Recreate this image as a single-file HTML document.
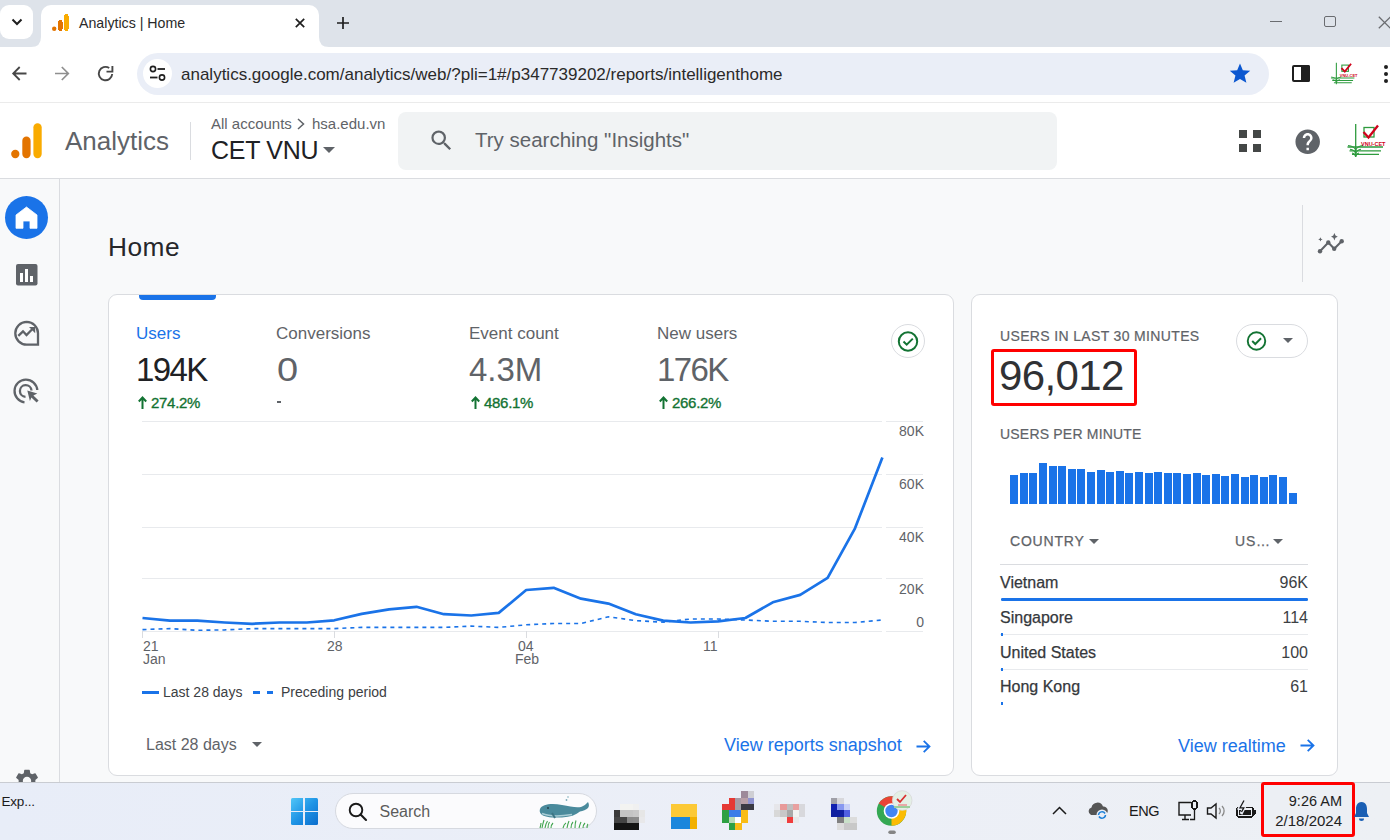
<!DOCTYPE html>
<html><head><meta charset="utf-8">
<style>
*{margin:0;padding:0;box-sizing:border-box}
html,body{width:1390px;height:840px;overflow:hidden;background:#f8f9fa;font-family:"Liberation Sans",sans-serif;position:relative}
.a{position:absolute}
.t{position:absolute;white-space:nowrap;line-height:1}
svg{position:absolute;overflow:visible}
rect{shape-rendering:crispEdges}
</style></head><body>

<!-- TAB STRIP -->
<div class="a" style="left:0;top:0;width:1390px;height:47px;background:#dee3ea"></div>
<div class="a" style="left:0;top:5px;width:33px;height:34px;background:#fff;border-radius:9px"></div>
<svg style="left:11px;top:18px" width="12" height="8" viewBox="0 0 12 8"><path d="M1.5 1.5 L6 6 L10.5 1.5" fill="none" stroke="#1f1f1f" stroke-width="2"/></svg>
<div class="a" style="left:41px;top:5px;width:278px;height:42px;background:#fff;border-radius:10px 10px 0 0"></div>
<!-- tab bottom flares -->
<svg style="left:31px;top:37px" width="10" height="10" viewBox="0 0 10 10"><path d="M0 10 Q10 10 10 0 L10 10 Z" fill="#fff"/></svg>
<svg style="left:319px;top:37px" width="10" height="10" viewBox="0 0 10 10"><path d="M10 10 Q0 10 0 0 L0 10 Z" fill="#fff"/></svg>
<!-- favicon -->
<svg style="left:52px;top:14px" width="17" height="17" viewBox="0 0 17 17"><rect x="12" y="0" width="4.5" height="17" rx="2.2" fill="#f9ab00"/><rect x="6" y="6" width="4.5" height="11" rx="2.2" fill="#e37400"/><circle cx="2.2" cy="14.8" r="2.2" fill="#e37400"/></svg>
<div class="t" style="left:79px;top:15.7px;font-size:14.2px;color:#2a2a2a">Analytics | Home</div>
<svg style="left:295px;top:18px" width="10" height="10" viewBox="0 0 10 10"><path d="M0.8 0.8 L9.2 9.2 M9.2 0.8 L0.8 9.2" stroke="#1f1f1f" stroke-width="1.7"/></svg>
<svg style="left:336px;top:16px" width="14" height="14" viewBox="0 0 14 14"><path d="M7 1 V13 M1 7 H13" stroke="#1f1f1f" stroke-width="1.7"/></svg>
<!-- window controls -->
<div class="a" style="left:1270px;top:20.6px;width:12px;height:1.3px;background:#6a6c70"></div>
<div class="a" style="left:1324.3px;top:15.8px;width:12px;height:11.6px;border:1.3px solid #6a6c70;border-radius:2px"></div>
<svg style="left:1378px;top:15.5px" width="14" height="13" viewBox="0 0 14 13"><path d="M0.8 0.8 L12.5 12.3 M12.5 0.8 L0.8 12.3" stroke="#6a6c70" stroke-width="1.3"/></svg>
<!-- TOOLBAR -->
<div class="a" style="left:0;top:47px;width:1390px;height:54px;background:#fff"></div>
<div class="a" style="left:0;top:101px;width:1390px;height:1px;background:#fff"></div><div class="a" style="left:0;top:102px;width:1390px;height:1px;background:#ebebeb"></div>


<!-- back/fwd/reload -->
<svg style="left:0;top:50px" width="130" height="50" viewBox="0 50 130 50">
<path d="M26.5 73.5 H13.5 M19.7 67 L13.2 73.5 L19.7 80" fill="none" stroke="#474747" stroke-width="1.8"/>
<path d="M55 73.5 H68 M61.8 67 L68.3 73.5 L61.8 80" fill="none" stroke="#8f8f8f" stroke-width="1.7"/>
<path d="M112.2 74 A6.7 6.7 0 1 1 109.2 68" fill="none" stroke="#474747" stroke-width="1.9"/>
<path d="M106.5 71.6 H112.4 V66" fill="none" stroke="#474747" stroke-width="1.9"/>
</svg>
<!-- omnibox -->
<div class="a" style="left:137px;top:53px;width:1132px;height:42px;background:#eaeef7;border-radius:21px"></div>
<div class="a" style="left:143px;top:59px;width:29px;height:29px;background:#fff;border-radius:50%"></div>
<svg style="left:149px;top:65px" width="17" height="17" viewBox="0 0 17 17"><circle cx="4" cy="4" r="2.6" fill="none" stroke="#1f1f1f" stroke-width="1.6"/><path d="M8.5 4 H16" stroke="#1f1f1f" stroke-width="1.8"/><circle cx="13" cy="12.5" r="2.6" fill="none" stroke="#1f1f1f" stroke-width="1.6"/><path d="M1 12.5 H8.5" stroke="#1f1f1f" stroke-width="1.8"/></svg>
<div class="t" style="left:181px;top:66px;font-size:17px;color:#2a2a2a">analytics.google.com/analytics/web/?pli=1#/p347739202/reports/intelligenthome</div>
<svg style="left:1229px;top:63px" width="22" height="21" viewBox="0 0 24 23"><path d="M12 0.5 L15.1 8 L23.2 8.6 L17 13.8 L19 21.7 L12 17.4 L5 21.7 L7 13.8 L0.8 8.6 L8.9 8 Z" fill="#0b57d0"/></svg>
<!-- side panel icon -->
<div class="a" style="left:1292px;top:65px;width:18px;height:17px;border:2px solid #1f1f1f;border-radius:2px"></div>
<div class="a" style="left:1301px;top:65px;width:9px;height:17px;background:#1f1f1f;border-radius:0 2px 2px 0"></div>
<!-- profile avatar small -->
<svg style="left:1326px;top:60px" width="33" height="28" viewBox="0 0 50 42"><path d="M15.7 4 V36.5 M7.5 27 H43 M9.5 30.8 H41 M12 34.3 H39" fill="none" stroke="#2e9b3e" stroke-width="1.6"/><path d="M8 25.5 Q14 26 15.7 30 Q17.4 26 23 25.5 M10 29.3 Q14.5 30 15.7 33.5 Q17 30 21 29.3" fill="none" stroke="#2e9b3e" stroke-width="1.3"/><rect x="24" y="7.5" width="10" height="9.5" fill="none" stroke="#2e9b3e" stroke-width="1.6" style="shape-rendering:auto"/><path d="M23.5 12 L28.5 17.5 L38 5.5" fill="none" stroke="#d0021b" stroke-width="2.8"/><text x="21" y="26" font-size="6" fill="#d0021b" font-family="Liberation Sans" font-weight="bold">VNU-CET</text></svg>
<div class="a" style="left:1384px;top:65px;width:4px;height:4px;background:#1f1f1f;border-radius:50%"></div>
<div class="a" style="left:1384px;top:72px;width:4px;height:4px;background:#1f1f1f;border-radius:50%"></div>
<div class="a" style="left:1384px;top:79px;width:4px;height:4px;background:#1f1f1f;border-radius:50%"></div>

<!-- GA HEADER -->
<div class="a" style="left:0;top:103px;width:1390px;height:76px;background:#fff;border-bottom:1px solid #dadce0"></div>
<svg style="left:0;top:110px" width="50" height="60" viewBox="0 110 50 60"><rect x="33.4" y="123.2" width="8.3" height="35" rx="4.15" fill="#f9ab00" style="shape-rendering:auto"/><rect x="22.3" y="136.6" width="8.3" height="21.6" rx="4.15" fill="#e37400" style="shape-rendering:auto"/><circle cx="15.3" cy="154" r="4.15" fill="#e37400"/></svg>
<div class="t" style="left:65px;top:128px;font-size:26px;color:#5f6368">Analytics</div>
<div class="a" style="left:190px;top:122px;width:1px;height:38px;background:#dadce0"></div>
<div class="t" style="left:211px;top:116px;font-size:15px;color:#5f6368">All accounts</div>
<svg style="left:297px;top:118px" width="8" height="12" viewBox="0 0 8 12"><path d="M1 1 L6.5 6 L1 11" fill="none" stroke="#5f6368" stroke-width="1.5"/></svg>
<div class="t" style="left:312px;top:116px;font-size:15px;color:#5f6368">hsa.edu.vn</div>
<div class="t" style="left:211px;top:138px;font-size:25px;color:#202124;letter-spacing:-0.3px">CET VNU</div>
<svg style="left:323px;top:147px" width="12" height="6" viewBox="0 0 12 6"><path d="M0 0 H12 L6 6 Z" fill="#5f6368"/></svg>
<!-- search -->
<div class="a" style="left:398px;top:112px;width:659px;height:58px;background:#f1f3f4;border-radius:8px"></div>
<svg style="left:428px;top:127px" width="27" height="27" viewBox="0 0 24 24"><path d="M15.5 14h-.79l-.28-.27A6.47 6.47 0 0 0 16 9.5 6.5 6.5 0 1 0 9.5 16c1.61 0 3.09-.59 4.23-1.57l.27.28v.79l5 4.99L20.49 19l-4.99-5zm-6 0C7.01 14 5 11.99 5 9.5S7.01 5 9.5 5 14 7.01 14 9.5 11.99 14 9.5 14z" fill="#5f6368"/></svg>
<div class="t" style="left:475px;top:129.5px;font-size:20.5px;color:#5f6368">Try searching "Insights"</div>
<!-- apps grid -->
<div class="a" style="left:1239px;top:130px;width:8px;height:8px;background:#444746"></div>
<div class="a" style="left:1253px;top:130px;width:8px;height:8px;background:#444746"></div>
<div class="a" style="left:1239px;top:144px;width:8px;height:8px;background:#444746"></div>
<div class="a" style="left:1253px;top:144px;width:8px;height:8px;background:#444746"></div>
<!-- help -->
<svg style="left:1293px;top:126.5px" width="29.4" height="29.4" viewBox="0 0 24 24"><path d="M12 2C6.48 2 2 6.48 2 12s4.48 10 10 10 10-4.48 10-10S17.52 2 12 2zm1 17h-2v-2h2v2zm2.07-7.750l-.9.92C13.45 12.9 13 13.5 13 15h-2v-.5c0-1.1.45-2.1 1.17-2.83l1.240-1.26c.37-.36.59-.86.59-1.41 0-1.1-.9-2-2-2s-2 .9-2 2H8c0-2.21 1.79-4 4-4s4 1.79 4 4c0 .88-.36 1.68-.93 2.25z" fill="#5f6368"/></svg>
<!-- avatar -->
<svg style="left:1340px;top:120px" width="50" height="42" viewBox="0 0 50 42"><path d="M15.7 4 V36.5 M7.5 27 H43 M9.5 30.8 H41 M12 34.3 H39" fill="none" stroke="#2e9b3e" stroke-width="1.3"/><path d="M8 25.5 Q14 26 15.7 30 Q17.4 26 23 25.5 M10 29.3 Q14.5 30 15.7 33.5 Q17 30 21 29.3 M12 33 Q15 33.5 15.7 36.8 Q16.4 33.5 19 33" fill="none" stroke="#2e9b3e" stroke-width="1.1"/><rect x="24" y="7.5" width="10" height="9.5" fill="none" stroke="#2e9b3e" stroke-width="1.3" style="shape-rendering:auto"/><path d="M23.5 12 L28.5 17.5 L38 5.5" fill="none" stroke="#d0021b" stroke-width="2.3"/><text x="21" y="26" font-size="5.5" fill="#d0021b" font-family="Liberation Sans" font-weight="bold">VNU-CET</text></svg>

<!-- LEFT NAV -->
<div class="a" style="left:59px;top:179px;width:1px;height:604px;background:#dadce0"></div>
<div class="a" style="left:5px;top:196px;width:43px;height:43px;background:#1a73e8;border-radius:50%"></div>
<svg style="left:0;top:0" width="60" height="420" viewBox="0 0 60 420">
<path d="M26.5 207 L37 215 V228.3 H30 V221 H23 V228.3 H16 V215 Z" fill="#fff" stroke="#fff" stroke-width="0.8" stroke-linejoin="round"/>
<rect x="16" y="264" width="21.5" height="21.5" rx="2" fill="#5f6368" style="shape-rendering:auto"/>
<rect x="20.3" y="272.6" width="2.7" height="9.3" fill="#fff"/><rect x="25.2" y="268.7" width="2.6" height="13.2" fill="#fff"/><rect x="30" y="275.8" width="2.7" height="6.1" fill="#fff"/>
<path d="M26.7 321.9 A11.3 11.3 0 1 0 15.4 333.2" fill="none" stroke="#5f6368" stroke-width="0"/>
<path d="M26.7 321.9 A11.4 11.4 0 0 0 26.7 344.7 H38 V333.3 A11.4 11.4 0 0 0 26.7 321.9 Z" fill="none" stroke="#5f6368" stroke-width="2.3"/>
<path d="M18.3 335.8 L23 331.3 L26.5 335 L32.2 329.3" fill="none" stroke="#5f6368" stroke-width="2.3"/>
<path d="M29 327 H35.2 V333.2 Z" fill="#5f6368"/>
<path d="M24.5 402.3 A11.4 11.4 0 1 1 37.3 390" fill="none" stroke="#5f6368" stroke-width="2.3"/>
<path d="M25.5 396.8 A5.8 5.8 0 1 1 31.5 390.5" fill="none" stroke="#5f6368" stroke-width="2.3"/>
<path d="M27.3 390.6 L37.3 393.6 L33.4 395.4 L38.6 400.6 L36.6 402.6 L31.4 397.4 L29.9 401 Z" fill="#5f6368"/>
</svg>
<svg style="left:12.5px;top:766.5px" width="28" height="28" viewBox="0 0 24 24"><path d="M19.14 12.94c.04-.3.06-.61.06-.94 0-.32-.02-.64-.07-.94l2.03-1.58a.49.49 0 0 0 .12-.61l-1.92-3.32a.488.488 0 0 0-.59-.22l-2.39.96c-.5-.38-1.03-.7-1.62-.94l-.36-2.54a.484.484 0 0 0-.48-.41h-3.84c-.24 0-.43.17-.47.41l-.36 2.54c-.59.24-1.13.57-1.62.94l-2.39-.96c-.22-.08-.47 0-.59.22L2.74 8.87c-.12.21-.08.47.12.61l2.03 1.58c-.05.3-.09.63-.09.94s.02.64.07.94l-2.03 1.58a.49.49 0 0 0-.12.61l1.92 3.32c.12.22.37.29.59.22l2.39-.96c.5.38 1.03.7 1.62.94l.36 2.54c.05.24.24.41.48.41h3.84c.24 0 .44-.17.47-.41l.36-2.54c.59-.24 1.13-.56 1.62-.94l2.39.96c.22.08.47 0 .59-.22l1.92-3.32c.12-.22.07-.47-.12-.61l-2.01-1.58zM12 15.6c-1.98 0-3.6-1.62-3.6-3.6s1.62-3.6 3.6-3.6 3.6 1.62 3.6 3.6-1.62 3.6-3.6 3.6z" fill="#5f6368"/></svg>

<!-- HOME TITLE -->
<div class="t" style="left:108px;top:234px;font-size:26.3px;color:#26272a;letter-spacing:0.5px">Home</div>
<div class="a" style="left:1302px;top:205px;width:1px;height:77px;background:#dadce0"></div>
<svg style="left:1317px;top:232px" width="28" height="22" viewBox="0 0 28 22"><path d="M3 19.25 L11.3 10.5 L17.2 16.75 L24.7 9.25" fill="none" stroke="#5f6368" stroke-width="2"/><circle cx="3" cy="19.25" r="2.2" fill="#5f6368"/><circle cx="11.3" cy="10.5" r="2.2" fill="#5f6368"/><circle cx="17.2" cy="16.75" r="2.2" fill="#5f6368"/><circle cx="24.7" cy="9.25" r="2.2" fill="#5f6368"/><path d="M17.4 1 L18.5 3.6 L20.8 4.7 L18.5 5.8 L17.4 8.6 L16.3 5.8 L14 4.7 L16.3 3.6Z" fill="#5f6368"/><path d="M3.4 5.2 L4.1 6.7 L5.6 7.4 L4.1 8.1 L3.4 9.6 L2.7 8.1 L1.2 7.4 L2.7 6.7Z" fill="#5f6368"/></svg>


<!-- CARD 1 -->
<div class="a" style="left:107.5px;top:294px;width:846.5px;height:482px;background:#fff;border:1px solid #dadce0;border-radius:9px"></div>
<div class="a" style="left:139px;top:295px;width:77px;height:5px;background:#1a73e8;border-radius:0 0 4px 4px"></div>
<div class="t" style="left:136px;top:325px;font-size:17px;color:#1a73e8">Users</div>
<div class="t" style="left:136px;top:353px;font-size:33px;color:#202124;letter-spacing:-1.6px">194K</div>
<svg style="left:138px;top:396px" width="9" height="13" viewBox="0 0 9 13"><path d="M4.5 13 V2 M0.8 5.5 L4.5 1.5 L8.2 5.5" fill="none" stroke="#137333" stroke-width="2"/></svg>
<div class="t" style="left:151px;top:395px;font-size:15px;color:#137333;letter-spacing:-0.3px;-webkit-text-stroke:0.35px #137333">274.2%</div>

<div class="t" style="left:276px;top:325px;font-size:17px;color:#5f6368">Conversions</div>
<div class="t" style="left:276.5px;top:353px;font-size:33px;color:#5f6368;transform:scaleX(1.15);transform-origin:0 0">0</div>
<div class="a" style="left:277px;top:401px;width:4px;height:1.5px;background:#5f6368"></div>

<div class="t" style="left:469px;top:325px;font-size:17px;color:#5f6368">Event count</div>
<div class="t" style="left:469px;top:353px;font-size:33px;color:#5f6368;letter-spacing:0px">4.3M</div>
<svg style="left:471px;top:396px" width="9" height="13" viewBox="0 0 9 13"><path d="M4.5 13 V2 M0.8 5.5 L4.5 1.5 L8.2 5.5" fill="none" stroke="#137333" stroke-width="2"/></svg>
<div class="t" style="left:484px;top:395px;font-size:15px;color:#137333;letter-spacing:-0.3px;-webkit-text-stroke:0.35px #137333">486.1%</div>

<div class="t" style="left:657px;top:325px;font-size:17px;color:#5f6368">New users</div>
<div class="t" style="left:657px;top:353px;font-size:33px;color:#5f6368;letter-spacing:-1.6px">176K</div>
<svg style="left:659px;top:396px" width="9" height="13" viewBox="0 0 9 13"><path d="M4.5 13 V2 M0.8 5.5 L4.5 1.5 L8.2 5.5" fill="none" stroke="#137333" stroke-width="2"/></svg>
<div class="t" style="left:672px;top:395px;font-size:15px;color:#137333;letter-spacing:-0.3px;-webkit-text-stroke:0.35px #137333">266.2%</div>

<div class="a" style="left:891px;top:324px;width:34px;height:34px;border:1px solid #dadce0;border-radius:50%;background:#fff"></div>
<svg style="left:897px;top:331px" width="22" height="21" viewBox="0 0 22 21"><circle cx="11" cy="10.5" r="9.2" fill="none" stroke="#137333" stroke-width="2"/><path d="M6.5 10.5 L9.7 13.7 L15.8 7.6" fill="none" stroke="#137333" stroke-width="2"/></svg>

<svg style="left:0;top:0" width="1390" height="840" viewBox="0 0 1390 840">
<path d="M142 421.5 H882 M886 421.5 H923" stroke="#e8eaed" stroke-width="1"/><path d="M142 474.5 H882 M886 474.5 H923" stroke="#e8eaed" stroke-width="1"/><path d="M142 527.5 H882 M886 527.5 H923" stroke="#e8eaed" stroke-width="1"/><path d="M142 578.5 H882 M886 578.5 H923" stroke="#e8eaed" stroke-width="1"/><path d="M142 631.5 H882 M886 631.5 H923" stroke="#e8eaed" stroke-width="1"/><path d="M142.5 631 V638" stroke="#dadce0" stroke-width="1"/><path d="M334.5 631 V638" stroke="#dadce0" stroke-width="1"/><path d="M526.5 631 V638" stroke="#dadce0" stroke-width="1"/><path d="M718.5 631 V638" stroke="#dadce0" stroke-width="1"/>
<polyline points="142.5,629.6 169.9,628.6 197.3,630.3 224.7,629.9 252.1,628.6 279.5,628.6 306.9,628.6 334.3,628.6 361.7,627.4 389.1,627.4 416.5,627.4 443.9,627.4 471.3,626.1 498.7,627.4 526.2,624.8 553.6,623.5 581.0,623.5 608.4,616.8 635.8,620.6 663.2,622.2 690.6,619 718.0,619 745.4,620 772.8,621.3 800.2,621.3 827.6,622.5 855.0,622.5 882.4,620" fill="none" stroke="#1a73e8" stroke-width="1.6" stroke-dasharray="4 4"/>
<polyline points="142.5,618 169.9,620.6 197.3,620.6 224.7,622.5 252.1,623.8 279.5,622.5 306.9,622.5 334.3,620.3 361.7,613.9 389.1,609.4 416.5,606.8 443.9,614.2 471.3,615.5 498.7,612.9 526.2,590 553.6,587.8 581.0,598.7 608.4,603.6 635.8,614.2 663.2,620.6 690.6,622.5 718.0,621.3 745.4,618 772.8,602.3 800.2,594.9 827.6,577.8 855.0,528.3 882.4,457.6" fill="none" stroke="#1a73e8" stroke-width="2.7" stroke-linejoin="round"/>
</svg>
<div class="t" style="left:880px;top:423.6px;width:44px;text-align:right;font-size:14px;color:#5f6368">80K</div>
<div class="t" style="left:880px;top:476.7px;width:44px;text-align:right;font-size:14px;color:#5f6368">60K</div>
<div class="t" style="left:880px;top:529.7px;width:44px;text-align:right;font-size:14px;color:#5f6368">40K</div>
<div class="t" style="left:880px;top:581.9px;width:44px;text-align:right;font-size:14px;color:#5f6368">20K</div>
<div class="t" style="left:880px;top:614.9px;width:44px;text-align:right;font-size:14px;color:#5f6368">0</div>
<div class="t" style="left:143px;top:639px;font-size:14px;color:#5f6368">21</div>
<div class="t" style="left:143px;top:652px;font-size:14px;color:#5f6368">Jan</div>
<div class="t" style="left:327px;top:639px;font-size:14px;color:#5f6368">28</div>
<div class="t" style="left:518px;top:639px;font-size:14px;color:#5f6368">04</div>
<div class="t" style="left:515px;top:652px;font-size:14px;color:#5f6368">Feb</div>
<div class="t" style="left:703px;top:639px;font-size:14px;color:#5f6368">11</div>

<div class="a" style="left:142px;top:691px;width:17px;height:3px;background:#1a73e8"></div>
<div class="t" style="left:163px;top:685px;font-size:14px;color:#3c4043">Last 28 days</div>
<div class="a" style="left:253.3px;top:690.6px;width:6.6px;height:3.6px;background:#1a73e8"></div>
<div class="a" style="left:266.5px;top:690.6px;width:6.8px;height:3.6px;background:#1a73e8"></div>
<div class="t" style="left:281px;top:685px;font-size:14px;color:#3c4043">Preceding period</div>

<div class="t" style="left:146px;top:737px;font-size:16px;color:#5f6368">Last 28 days</div>
<svg style="left:252px;top:742px" width="10" height="5" viewBox="0 0 10 5"><path d="M0 0 H10 L5 5 Z" fill="#5f6368"/></svg>
<div class="t" style="left:724px;top:736px;font-size:18px;color:#1a73e8">View reports snapshot</div>
<svg style="left:916px;top:739.5px" width="15" height="13" viewBox="0 0 15 13"><path d="M0.5 6.5 H13.5 M7.7 0.8 L13.5 6.5 L7.7 12.2" fill="none" stroke="#1a73e8" stroke-width="1.8"/></svg>


<!-- CARD 2 -->
<div class="a" style="left:971px;top:294px;width:367px;height:482px;background:#fff;border:1px solid #dadce0;border-radius:9px"></div>
<div class="t" style="left:1000px;top:329px;font-size:14px;color:#5f6368;letter-spacing:0.35px;-webkit-text-stroke:0.2px #5f6368">USERS IN LAST 30 MINUTES</div>
<div class="a" style="left:1236px;top:324px;width:72px;height:34px;border:1px solid #dadce0;border-radius:17px"></div>
<svg style="left:1246px;top:331px" width="21" height="20" viewBox="0 0 22 21"><circle cx="11" cy="10.5" r="9.2" fill="none" stroke="#137333" stroke-width="2"/><path d="M6.5 10.5 L9.7 13.7 L15.8 7.6" fill="none" stroke="#137333" stroke-width="2"/></svg>
<svg style="left:1283px;top:338px" width="10" height="5" viewBox="0 0 10 5"><path d="M0 0 H10 L5 5 Z" fill="#5f6368"/></svg>
<div class="a" style="left:991px;top:349px;width:146px;height:57px;border:3px solid #ff0000;border-radius:3px"></div>
<div class="t" style="left:999px;top:355px;font-size:42px;color:#303134;letter-spacing:-0.6px">96,012</div>
<div class="t" style="left:1000px;top:427px;font-size:14px;color:#5f6368;letter-spacing:0.2px;-webkit-text-stroke:0.2px #5f6368">USERS PER MINUTE</div>
<svg style="left:0;top:0" width="1390" height="840" viewBox="0 0 1390 840"><rect x="1010.1" y="475" width="8" height="29.0" fill="#1a73e8"/><rect x="1019.7" y="472.5" width="8" height="31.5" fill="#1a73e8"/><rect x="1029.3" y="472.5" width="8" height="31.5" fill="#1a73e8"/><rect x="1038.9" y="462.6" width="8" height="41.4" fill="#1a73e8"/><rect x="1048.5" y="466.3" width="8" height="37.7" fill="#1a73e8"/><rect x="1058.1" y="466.3" width="8" height="37.7" fill="#1a73e8"/><rect x="1067.7" y="468.5" width="8" height="35.5" fill="#1a73e8"/><rect x="1077.3" y="468.5" width="8" height="35.5" fill="#1a73e8"/><rect x="1086.9" y="471.6" width="8" height="32.4" fill="#1a73e8"/><rect x="1096.5" y="470" width="8" height="34.0" fill="#1a73e8"/><rect x="1106.1" y="471.6" width="8" height="32.4" fill="#1a73e8"/><rect x="1115.7" y="470.7" width="8" height="33.3" fill="#1a73e8"/><rect x="1125.3" y="472.5" width="8" height="31.5" fill="#1a73e8"/><rect x="1134.9" y="471.6" width="8" height="32.4" fill="#1a73e8"/><rect x="1144.5" y="473.4" width="8" height="30.6" fill="#1a73e8"/><rect x="1154.1" y="471.6" width="8" height="32.4" fill="#1a73e8"/><rect x="1163.7" y="473.4" width="8" height="30.6" fill="#1a73e8"/><rect x="1173.3" y="472.5" width="8" height="31.5" fill="#1a73e8"/><rect x="1182.9" y="474.1" width="8" height="29.9" fill="#1a73e8"/><rect x="1192.5" y="473.4" width="8" height="30.6" fill="#1a73e8"/><rect x="1202.1" y="475" width="8" height="29.0" fill="#1a73e8"/><rect x="1211.7" y="474.1" width="8" height="29.9" fill="#1a73e8"/><rect x="1221.3" y="475.6" width="8" height="28.4" fill="#1a73e8"/><rect x="1230.9" y="474.1" width="8" height="29.9" fill="#1a73e8"/><rect x="1240.5" y="476.5" width="8" height="27.5" fill="#1a73e8"/><rect x="1250.1" y="475" width="8" height="29.0" fill="#1a73e8"/><rect x="1259.7" y="476.5" width="8" height="27.5" fill="#1a73e8"/><rect x="1269.3" y="475" width="8" height="29.0" fill="#1a73e8"/><rect x="1278.9" y="477.2" width="8" height="26.8" fill="#1a73e8"/><rect x="1288.5" y="492.6" width="8" height="11.4" fill="#1a73e8"/></svg>
<div class="t" style="left:1010px;top:534px;font-size:14px;color:#5f6368;letter-spacing:0.8px;-webkit-text-stroke:0.25px #5f6368">COUNTRY</div>
<svg style="left:1089px;top:539px" width="10" height="5" viewBox="0 0 10 5"><path d="M0 0 H10 L5 5 Z" fill="#5f6368"/></svg>
<div class="t" style="left:1235px;top:534px;font-size:14px;color:#5f6368;letter-spacing:0.8px;-webkit-text-stroke:0.25px #5f6368">US<span style="letter-spacing:-1px">…</span></div>
<svg style="left:1273px;top:539px" width="10" height="5" viewBox="0 0 10 5"><path d="M0 0 H10 L5 5 Z" fill="#5f6368"/></svg>
<div class="a" style="left:1000px;top:564px;width:308px;height:1px;background:#dadce0"></div>
<div class="t" style="left:1000px;top:575px;font-size:16px;color:#35383c;-webkit-text-stroke:0.25px #35383c">Vietnam</div>
<div class="t" style="left:1200px;top:575px;width:108px;text-align:right;font-size:16px;color:#3c4043">96K</div>
<div class="a" style="left:1001px;top:598px;width:307px;height:2.5px;background:#1a73e8;border-radius:1.25px"></div>
<div class="t" style="left:1000px;top:610px;font-size:16px;color:#35383c;-webkit-text-stroke:0.25px #35383c">Singapore</div>
<div class="t" style="left:1200px;top:610px;width:108px;text-align:right;font-size:16px;color:#3c4043">114</div>
<div class="a" style="left:1000px;top:634px;width:308px;height:1px;background:#e8eaed"></div>
<div class="a" style="left:1001px;top:633px;width:1.5px;height:2.5px;background:#1a73e8"></div>
<div class="t" style="left:1000px;top:645px;font-size:16px;color:#35383c;-webkit-text-stroke:0.25px #35383c">United States</div>
<div class="t" style="left:1200px;top:645px;width:108px;text-align:right;font-size:16px;color:#3c4043">100</div>
<div class="a" style="left:1000px;top:669px;width:308px;height:1px;background:#e8eaed"></div>
<div class="a" style="left:1001px;top:668px;width:1.5px;height:2.5px;background:#1a73e8"></div>
<div class="t" style="left:1000px;top:679px;font-size:16px;color:#35383c;-webkit-text-stroke:0.25px #35383c">Hong Kong</div>
<div class="t" style="left:1200px;top:679px;width:108px;text-align:right;font-size:16px;color:#3c4043">61</div>
<div class="a" style="left:1001px;top:702px;width:1.5px;height:2.5px;background:#1a73e8"></div>
<div class="t" style="left:1178px;top:737px;font-size:18px;color:#1a73e8">View realtime</div>
<svg style="left:1300px;top:738.7px" width="15" height="13" viewBox="0 0 15 13"><path d="M0.5 6.5 H13.5 M7.7 0.8 L13.5 6.5 L7.7 12.2" fill="none" stroke="#1a73e8" stroke-width="1.8"/></svg>

<!-- TASKBAR -->
<div class="a" style="left:0;top:782px;width:1390px;height:58px;background:linear-gradient(90deg,#e8edf8 0%,#eceff7 60%,#edf0f4 100%);border-top:1px solid #c9ccd2"></div>
<div class="t" style="left:1.5px;top:794.5px;font-size:13.5px;color:#1a1a1a;letter-spacing:-0.2px">Exp...</div>
<!-- windows logo -->
<div class="a" style="left:290.5px;top:797.7px;width:27.5px;height:27.6px;background:linear-gradient(135deg,#52c6f7 0%,#1f95e6 50%,#0a6ccc 100%);border-radius:1.5px"></div>
<div class="a" style="left:303.3px;top:797.7px;width:1.9px;height:27.6px;background:#e8edf8"></div>
<div class="a" style="left:290.5px;top:810.5px;width:27.5px;height:1.9px;background:#e8edf8"></div>
<!-- search pill -->
<div class="a" style="left:335px;top:793px;width:262px;height:36px;background:#fbfbfd;border:1px solid #d6d9e0;border-radius:18px"></div>
<svg style="left:348px;top:802px" width="20" height="20" viewBox="0 0 20 20"><circle cx="8" cy="8" r="6.3" fill="none" stroke="#1a1a1a" stroke-width="1.9"/><path d="M12.6 12.6 L18 18" stroke="#1a1a1a" stroke-width="2.1" stroke-linecap="round"/></svg>
<div class="t" style="left:379.5px;top:804px;font-size:16px;color:#5b5b5b">Search</div>
<svg style="left:536px;top:795px" width="56" height="36" viewBox="0 0 56 36">
<path d="M4 14 C6 9 16 8 26 10 C34 11.5 40 13 45 12 C48 11 50 9 52 7 C53 9 53.5 11 52 13 C50 15 47 16 44 16.5 C40 20 34 22 26 22.5 C16 23 8 22 5 19 C3.5 17.5 3.5 15.5 4 14 Z" fill="#4a8a9c"/>
<path d="M6 18.5 C12 21 24 21.5 36 19.5" fill="none" stroke="#a9cdd6" stroke-width="1.6"/>
<path d="M16 18 L19 23" stroke="#3d7585" stroke-width="2"/>
<circle cx="12" cy="13" r="0.9" fill="#1d3a44"/>
<circle cx="32" cy="2" r="0.8" fill="#7aaab8"/><circle cx="30.5" cy="5" r="0.9" fill="#7aaab8"/>
<path d="M6 33 Q7 28 8 25 M9 33 Q10 28 11.5 26 M12 33 Q12 29 13.5 27 M15 33 Q15 30 17 28 M4 33 Q5 30 5 28" fill="none" stroke="#3fa34d" stroke-width="1.1"/>
<path d="M27 33 Q28 29 30 28 M31 33 Q32 28 33 26 M35 33 Q35 29 37 27 M39 33 Q39 28 40 25.5 M43 33 Q44 29 45 27 M47 33 Q47 30 49 28 M51 33 Q51 30 52 29" fill="none" stroke="#3fa34d" stroke-width="1.1"/>
</svg>
<!-- pixelated app icons -->
<svg style="left:0;top:0" width="1390" height="840" viewBox="0 0 1390 840"><rect x="620.1" y="804.0" width="6.7" height="6.4" fill="#f3f3f1"/><rect x="626.5" y="804.0" width="6.6" height="6.4" fill="#f3f3f1"/><rect x="632.8" y="804.0" width="6.4" height="6.4" fill="#f0f0f0"/><rect x="613.6" y="810.1" width="6.8" height="6.9" fill="#3a3a3a"/><rect x="620.1" y="810.1" width="6.7" height="6.9" fill="#c4c4c4"/><rect x="626.5" y="810.1" width="6.6" height="6.9" fill="#c4c4c4"/><rect x="632.8" y="810.1" width="6.4" height="6.9" fill="#c8c8c8"/><rect x="638.9" y="810.1" width="6.4" height="6.9" fill="#e6e6e6"/><rect x="613.6" y="816.7" width="6.8" height="6.6" fill="#444"/><rect x="620.1" y="816.7" width="6.7" height="6.6" fill="#444"/><rect x="626.5" y="816.7" width="6.6" height="6.6" fill="#888"/><rect x="632.8" y="816.7" width="6.4" height="6.6" fill="#8a8a8a"/><rect x="638.9" y="816.7" width="6.4" height="6.6" fill="#e8e8ea"/><rect x="613.6" y="823.0" width="6.8" height="6.6" fill="#141414"/><rect x="620.1" y="823.0" width="6.7" height="6.6" fill="#141414"/><rect x="626.5" y="823.0" width="6.6" height="6.6" fill="#141414"/><rect x="632.8" y="823.0" width="6.4" height="6.6" fill="#141414"/><rect x="671.1" y="804" width="25.4" height="12.7" fill="#fcc936"/><rect x="671.1" y="816.7" width="19" height="12.6" fill="#1a86dc"/><rect x="690.1" y="816.7" width="6.4" height="12.6" fill="#f2b000"/><rect x="741.4" y="791.3" width="6.8" height="6.7" fill="#9d8a9a"/><rect x="747.9" y="791.3" width="6.4" height="6.7" fill="#cfcfd4"/><rect x="728.6" y="797.7" width="6.6" height="6.6" fill="#e53935"/><rect x="734.9" y="797.7" width="6.8" height="6.6" fill="#a89aa5"/><rect x="741.4" y="797.7" width="6.8" height="6.6" fill="#b8a0a8"/><rect x="747.9" y="797.7" width="6.4" height="6.6" fill="#8f93d0"/><rect x="722.0" y="804.0" width="6.9" height="6.4" fill="#e53935"/><rect x="728.6" y="804.0" width="6.6" height="6.4" fill="#e53935"/><rect x="734.9" y="804.0" width="6.8" height="6.4" fill="#a0a0a8"/><rect x="741.4" y="804.0" width="6.8" height="6.4" fill="#3a3a44"/><rect x="747.9" y="804.0" width="6.4" height="6.4" fill="#3a3a44"/><rect x="722.0" y="810.1" width="6.9" height="6.9" fill="#2ea043"/><rect x="728.6" y="810.1" width="6.6" height="6.9" fill="#3b7de8"/><rect x="734.9" y="810.1" width="6.8" height="6.9" fill="#3b7de8"/><rect x="741.4" y="810.1" width="6.8" height="6.9" fill="#f9bc15"/><rect x="722.0" y="816.7" width="6.9" height="6.6" fill="#2ea043"/><rect x="728.6" y="816.7" width="6.6" height="6.6" fill="#b8dbb8"/><rect x="734.9" y="816.7" width="6.8" height="6.6" fill="#ffffff"/><rect x="741.4" y="816.7" width="6.8" height="6.6" fill="#f9bc15"/><rect x="728.6" y="823.0" width="6.6" height="6.6" fill="#2ea043"/><rect x="734.9" y="823.0" width="6.8" height="6.6" fill="#f9bc15"/><rect x="773.6" y="804.0" width="6.8" height="6.4" fill="#e6e6ea"/><rect x="780.1" y="804.0" width="6.7" height="6.4" fill="#e89a9a"/><rect x="786.5" y="804.0" width="6.6" height="6.4" fill="#bfbfc0"/><rect x="792.8" y="804.0" width="6.4" height="6.4" fill="#e8a0a0"/><rect x="798.9" y="804.0" width="6.3" height="6.4" fill="#d8d8dc"/><rect x="773.6" y="810.1" width="6.8" height="6.9" fill="#d8d8d8"/><rect x="780.1" y="810.1" width="6.7" height="6.9" fill="#c8c8c8"/><rect x="786.5" y="810.1" width="6.6" height="6.9" fill="#a8a8a8"/><rect x="792.8" y="810.1" width="6.4" height="6.9" fill="#f2f2f2"/><rect x="798.9" y="810.1" width="6.3" height="6.9" fill="#d8d8dc"/><rect x="780.1" y="816.7" width="6.7" height="6.6" fill="#ececec"/><rect x="786.5" y="816.7" width="6.6" height="6.6" fill="#f03c3c"/><rect x="792.8" y="816.7" width="6.4" height="6.6" fill="#e8e8ea"/><rect x="831.1" y="797.7" width="6.6" height="6.6" fill="#a0a0a8"/><rect x="837.4" y="797.7" width="6.7" height="6.6" fill="#d8d8dc"/><rect x="831.1" y="804.0" width="6.6" height="6.4" fill="#1020b0"/><rect x="837.4" y="804.0" width="6.7" height="6.4" fill="#8898f0"/><rect x="843.8" y="804.0" width="6.6" height="6.4" fill="#c8d0f8"/><rect x="831.1" y="810.1" width="6.6" height="6.9" fill="#1020a0"/><rect x="837.4" y="810.1" width="6.7" height="6.9" fill="#1020a0"/><rect x="843.8" y="810.1" width="6.6" height="6.9" fill="#5060e0"/><rect x="837.4" y="816.7" width="6.7" height="6.6" fill="#808080"/><rect x="843.8" y="816.7" width="6.6" height="6.6" fill="#c8e0c8"/><rect x="850.1" y="816.7" width="6.7" height="6.6" fill="#dcdcdc"/><rect x="837.4" y="823.0" width="6.7" height="6.6" fill="#dcdcdc"/><rect x="843.8" y="823.0" width="6.6" height="6.6" fill="#c8c8c8"/><rect x="850.1" y="823.0" width="6.7" height="6.6" fill="#c8c8c8"/>
<circle cx="891.5" cy="811" r="14.7" fill="#34a853"/><path d="M891.5 811 L878.8 803.6 A14.7 14.7 0 0 1 904.2 803.6 Z" fill="#ea4335"/><path d="M891.5 811 L904.2 803.6 A14.7 14.7 0 0 1 891.5 825.7 Z" fill="#fbbc04"/><circle cx="891.5" cy="811" r="7.8" fill="#fff"/><circle cx="891.5" cy="811" r="6.2" fill="#4285f4"/>
<circle cx="902.2" cy="800.5" r="9.8" fill="#e4efe6" stroke="#d8d8d8" stroke-width="0.8"/><path d="M897 799 L900 802 L906 795" fill="none" stroke="#d93030" stroke-width="1.8"/><rect x="898" y="803.5" width="9" height="2" fill="#e8a8a8"/><rect x="894" y="806" width="16" height="1.5" fill="#9ccf9c"/>
<rect x="888.3" y="830.5" width="7.5" height="3.5" rx="1.75" fill="#858585" style="shape-rendering:auto"/>
</svg>
<!-- tray -->
<svg style="left:1052px;top:806px" width="15" height="9" viewBox="0 0 15 9"><path d="M1 8 L7.5 1.5 L14 8" fill="none" stroke="#1a1a1a" stroke-width="1.5"/></svg>
<svg style="left:1087px;top:801px" width="22" height="20" viewBox="0 0 22 20"><path d="M4 14 A4 4 0 0 1 4.5 6.5 A6 6 0 0 1 16 5.5 A4.2 4.2 0 0 1 17 14 Z" fill="#555"/><circle cx="15" cy="14" r="5.5" fill="#eaeef6"/><path d="M11.5 14 A3.5 3.5 0 0 1 18 12.5 M18.5 14 A3.5 3.5 0 0 1 12 15.5" fill="none" stroke="#1a7fd8" stroke-width="1.5"/></svg>
<div class="t" style="left:1129px;top:804px;font-size:14.5px;color:#1a1a1a;letter-spacing:-0.5px">ENG</div>
<svg style="left:1177px;top:800px" width="22" height="22" viewBox="0 0 22 22"><path d="M14 2.5 H2 V15 H14 M5 19.5 H12 M8 15 V19.5" fill="none" stroke="#1a1a1a" stroke-width="1.4"/><rect x="15" y="1" width="5" height="8" rx="1.5" fill="none" stroke="#1a1a1a" stroke-width="1.3"/><path d="M17.5 9 V19.5 H13" fill="none" stroke="#1a1a1a" stroke-width="1.3"/></svg>
<svg style="left:1206px;top:802px" width="22" height="18" viewBox="0 0 22 18"><path d="M1.5 6 H5 L10 2 V16 L5 12 H1.5 Z" fill="none" stroke="#1a1a1a" stroke-width="1.4"/><path d="M13 6 A4 4 0 0 1 13 12 M16 4 A7 7 0 0 1 16 14" fill="none" stroke="#888" stroke-width="1.3"/></svg>
<svg style="left:1230px;top:798px" width="30" height="22" viewBox="0 0 30 22"><rect x="7" y="9.5" width="16" height="9.5" rx="2" fill="none" stroke="#1a1a1a" stroke-width="1.4"/><rect x="23.5" y="12" width="2.5" height="4.5" rx="0.8" fill="#1a1a1a"/><rect x="9" y="11.5" width="12" height="5.5" fill="#1a1a1a"/><path d="M14 2.5 L9.5 10 H14 L11 16" fill="none" stroke="#eaeef6" stroke-width="3"/><path d="M14 2.5 L10 9.8 H13.8 L11.5 14" fill="none" stroke="#1a1a1a" stroke-width="1.3"/></svg>
<div class="a" style="left:1261px;top:782px;width:94px;height:55px;border:3.5px solid #ff0000;border-radius:3px;background:#eceff4"></div>
<div class="t" style="left:1240px;top:794px;width:102px;text-align:right;font-size:14.5px;color:#222">9:26 AM</div>
<div class="t" style="left:1240px;top:813px;width:102px;text-align:right;font-size:15px;color:#222">2/18/2024</div>
<svg style="left:1353px;top:801px" width="17" height="21" viewBox="0 0 17 21"><path d="M8.5 1 C4 1 3 5 3 8 V12 L1 16 H16 L14 12 V8 C14 5 13 1 8.5 1 Z" fill="#1a5fb4"/><path d="M6 17.5 A2.5 2.5 0 0 0 11 17.5 Z" fill="#1a5fb4"/></svg>

</body></html>
